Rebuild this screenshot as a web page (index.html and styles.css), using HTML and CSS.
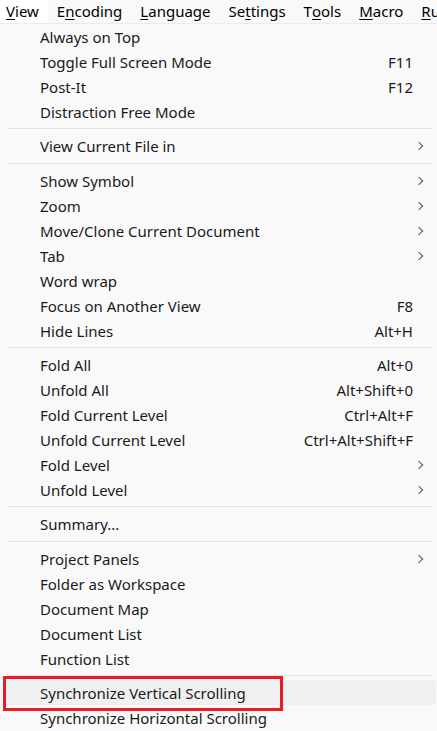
FILE: index.html
```html
<!DOCTYPE html>
<html>
<head>
<meta charset="utf-8">
<link rel="stylesheet" href="styles.css">
</head>
<body>
<div class="menubar">
  <span class="mb-item active"><u>V</u>iew</span>
  <span class="mb-item">E<u>n</u>coding</span>
  <span class="mb-item"><u>L</u>anguage</span>
  <span class="mb-item">Se<u>t</u>tings</span>
  <span class="mb-item">T<u>o</u>ols</span>
  <span class="mb-item"><u>M</u>acro</span>
  <span class="mb-item"><u>R</u>un</span>
</div>
<div class="menu">
  <div class="row"><span class="label">Always on Top</span></div>
  <div class="row"><span class="label">Toggle Full Screen Mode</span><span class="key">F11</span></div>
  <div class="row"><span class="label">Post-It</span><span class="key">F12</span></div>
  <div class="row"><span class="label">Distraction Free Mode</span></div>
  <div class="sep"></div>
  <div class="row sub"><span class="label">View Current File in</span></div>
  <div class="sep tall"></div>
  <div class="row sub"><span class="label">Show Symbol</span></div>
  <div class="row sub"><span class="label">Zoom</span></div>
  <div class="row sub"><span class="label">Move/Clone Current Document</span></div>
  <div class="row sub"><span class="label">Tab</span></div>
  <div class="row"><span class="label">Word wrap</span></div>
  <div class="row"><span class="label">Focus on Another View</span><span class="key">F8</span></div>
  <div class="row"><span class="label">Hide Lines</span><span class="key">Alt+H</span></div>
  <div class="sep"></div>
  <div class="row"><span class="label">Fold All</span><span class="key">Alt+0</span></div>
  <div class="row"><span class="label">Unfold All</span><span class="key">Alt+Shift+0</span></div>
  <div class="row"><span class="label">Fold Current Level</span><span class="key">Ctrl+Alt+F</span></div>
  <div class="row"><span class="label">Unfold Current Level</span><span class="key">Ctrl+Alt+Shift+F</span></div>
  <div class="row sub"><span class="label">Fold Level</span></div>
  <div class="row sub"><span class="label">Unfold Level</span></div>
  <div class="sep"></div>
  <div class="row"><span class="label">Summary...</span></div>
  <div class="sep tall"></div>
  <div class="row sub"><span class="label">Project Panels</span></div>
  <div class="row"><span class="label">Folder as Workspace</span></div>
  <div class="row"><span class="label">Document Map</span></div>
  <div class="row"><span class="label">Document List</span></div>
  <div class="row"><span class="label">Function List</span></div>
  <div class="sep"></div>
  <div class="row hover marked"><span class="label">Synchronize Vertical Scrolling</span></div>
  <div class="row"><span class="label">Synchronize Horizontal Scrolling</span></div>
</div>
</body>
</html>
```
FILE: styles.css
```css
html, body {
  margin: 0;
  padding: 0;
  background: #f9f9f9;
  overflow: hidden;
}
body {
  font-family: "Noto Sans", "Open Sans", sans-serif;
  font-size: 15px;
  color: #1a1a1a;
  width: 437px;
  height: 731px;
}
.menubar {
  display: flex;
  height: 23px;
  border-bottom: 1px solid #ececec;
  background: #f9f9f9;
  white-space: nowrap;
  overflow: hidden;
}
.mb-item {
  display: flex;
  align-items: center;
  padding: 0 9px 0 9px;
  color: #000;
  line-height: 23px;
}
.mb-item:first-child {
  padding-left: 6px;
}
.mb-item.active {
  background: #ffffff;
}
.mb-item u {
  text-decoration-thickness: 1px;
  text-underline-offset: 2px;
}
.menu {
  padding-top: 0;
  padding-left: 4px;
  padding-right: 1px;
}
.row {
  position: relative;
  display: flex;
  align-items: center;
  height: 25px;
  padding-left: 36px;
  padding-right: 23px;
  border-radius: 4px;
  white-space: nowrap;
}
.label {
  flex: 1;
}
.key {
  text-align: right;
}
.row.sub::after {
  content: "";
  position: absolute;
  right: 14px;
  top: 50%;
  width: 5px;
  height: 5px;
  border-right: 1.5px solid #555;
  border-top: 1.5px solid #555;
  transform: translateY(-50%) rotate(45deg);
}
.sep {
  height: 1px;
  background: #e3e3e3;
  margin: 4px 3px 4px 3px;
}
.sep.tall {
  margin-top: 5px;
}
.row.hover {
  background: #f0f0f0;
}
.row.marked::before {
  content: "";
  position: absolute;
  left: -1px;
  top: -4px;
  width: 274px;
  height: 29px;
  border: 3px solid #ed1c24;
}
```
